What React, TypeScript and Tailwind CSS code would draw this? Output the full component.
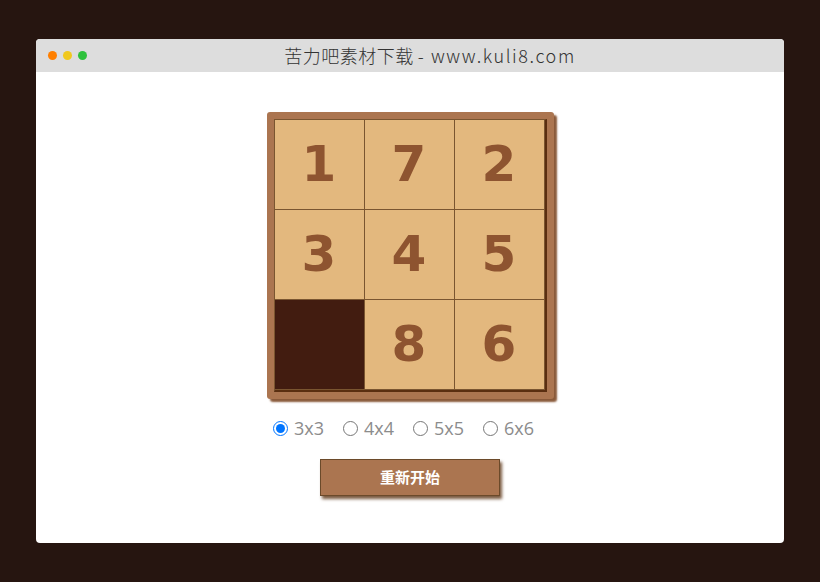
import { useState } from "react";

const sizes = ["3x3", "4x4", "5x5", "6x6"];
const tiles = [1, 7, 2, 3, 4, 5, 0, 8, 6];

const App = () => {
  const [size, setSize] = useState("3x3");

  return (
    <div className="w-[820px] h-[582px] bg-[#261510] pt-[39px] pl-[36px]">
      <div className="w-[748px] h-[504px] bg-white rounded-[4px] overflow-hidden flex flex-col">
        {/* window title bar */}
        <div className="h-[33px] bg-[#dddddd] flex items-center relative">
          <div className="flex gap-[6px] pl-[12px]">
            <span className="w-[9px] h-[9px] rounded-full bg-[#ff7f00]" />
            <span className="w-[9px] h-[9px] rounded-full bg-[#f0c81e]" />
            <span className="w-[9px] h-[9px] rounded-full bg-[#2ec13c]" />
          </div>
          <div className="absolute inset-0 flex items-center justify-center pl-[40px] text-[18px] text-[#333] font-['Noto_Sans_CJK_SC',sans-serif] font-light">
            <span className="tracking-[0.5px]">苦力吧素材下载</span>
            <span className="tracking-[1.6px] ml-[4px]">- www.kuli8.com</span>
          </div>
        </div>

        <div className="flex flex-col items-center pt-[40px]">
          {/* puzzle board */}
          <div className="bg-[#ab7550] p-[7px] rounded-[3px] shadow-[3px_3px_2px_#8a5a3a]">
            <div className="grid grid-cols-[repeat(3,90px)] grid-rows-[repeat(3,90px)] border-l border-t border-r-2 border-b-2 border-l-[#7a5530] border-t-[#7a5530] border-r-[#5a2e10] border-b-[#5a2e10]">
              {tiles.map((n, i) =>
                n === 0 ? (
                  <div key={i} className="bg-[#421c10] border-r border-b border-[#7a5530]" />
                ) : (
                  <div
                    key={i}
                    className="bg-[#e3b87e] border-r border-b border-[#7a5530] flex items-center justify-center text-[50px] font-bold text-[#8e5430] font-['DejaVu_Sans',Verdana,sans-serif]"
                  >
                    {n}
                  </div>
                )
              )}
            </div>
          </div>

          {/* size picker */}
          <div className="flex items-center gap-[19px] mt-[16px] pr-[13px] font-['Open_Sans',sans-serif] text-[18px] text-[#8c8c8c]">
            {sizes.map((s) => (
              <label key={s} className="flex items-center gap-[6px] cursor-pointer">
                <input
                  type="radio"
                  name="size"
                  checked={size === s}
                  onChange={() => setSize(s)}
                  className="w-[15px] h-[15px] accent-[#0075ff] m-0"
                />
                {s}
              </label>
            ))}
          </div>

          <button className="mt-[17px] w-[180px] h-[37px] bg-[#ab7550] border border-[#6b4a2a] shadow-[2px_3px_3px_#7a5a40] text-white font-bold text-[15px] font-['Noto_Sans_CJK_SC',sans-serif]">
            重新开始
          </button>
        </div>
      </div>
    </div>
  );
};

export default App;
